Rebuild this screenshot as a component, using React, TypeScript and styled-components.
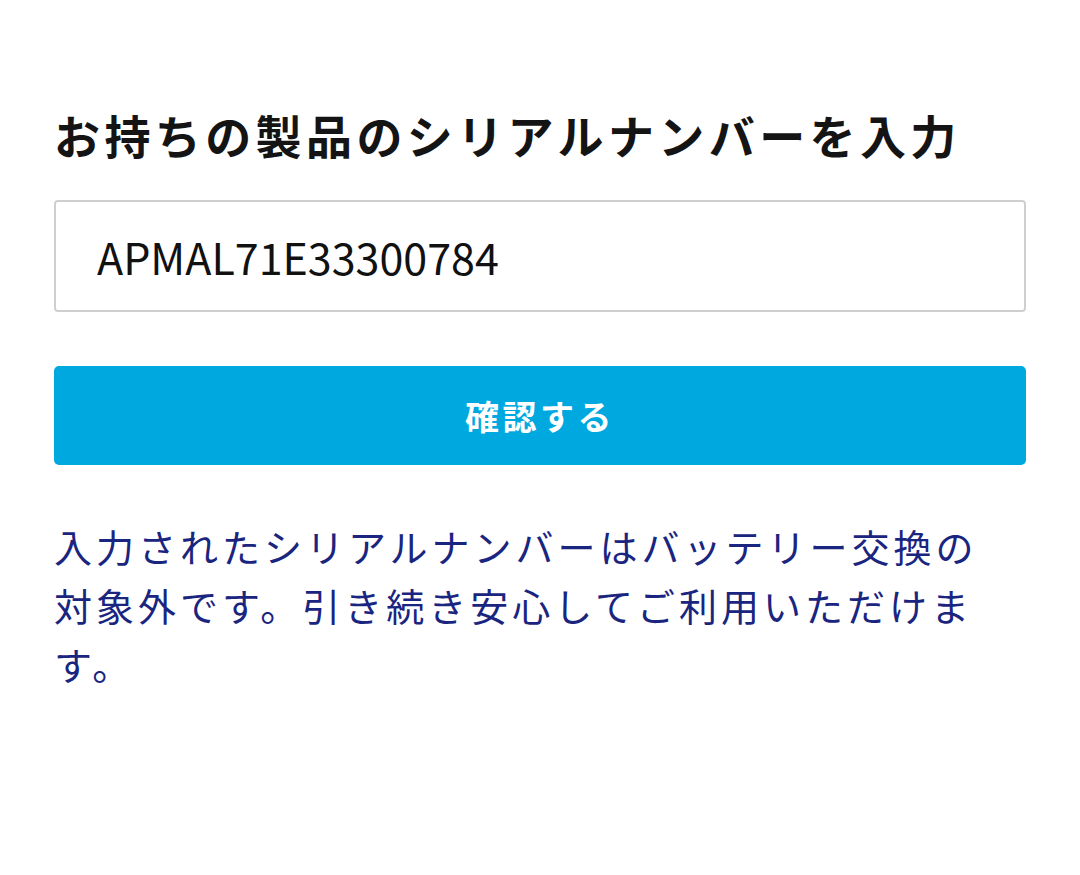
import React from 'react';
import styled, { createGlobalStyle } from 'styled-components';

const GlobalStyle = createGlobalStyle`
  html, body {
    margin: 0;
    padding: 0;
    background: #ffffff;
  }
  body {
    font-family: "Noto Sans CJK JP", "Noto Sans", sans-serif;
  }
`;

const Page = styled.main`
  width: 1080px;
  box-sizing: border-box;
  padding: 100px 54px 0;
  display: flex;
  flex-direction: column;
`;

const Title = styled.h1`
  margin: 0;
  font-size: 46px;
  line-height: 69px;
  font-weight: 700;
  letter-spacing: 4.4px;
  color: #141414;
`;

const SerialInput = styled.input`
  margin-top: 31px;
  height: 112px;
  box-sizing: border-box;
  border: 2px solid #cfcfcf;
  border-radius: 4px;
  padding: 0 41px;
  font-family: "Noto Sans CJK JP", "Noto Sans", sans-serif;
  font-size: 43px;
  color: #111;
  background: #fff;
  outline: none;
`;

const ConfirmButton = styled.button`
  margin-top: 54px;
  height: 99px;
  border: none;
  border-radius: 5px;
  background: #00a8e0;
  color: #fff;
  font-family: "Noto Sans CJK JP", "Noto Sans", sans-serif;
  font-size: 34px;
  font-weight: 700;
  letter-spacing: 3.5px;
  cursor: pointer;
`;

const Notice = styled.p`
  margin: 51px 0 0;
  padding-right: 30px;
  font-size: 38px;
  line-height: 59px;
  letter-spacing: 4px;
  color: #1a2580;
`;

export default function App() {
  return (
    <>
      <GlobalStyle />
      <Page>
        <Title>お持ちの製品のシリアルナンバーを入力</Title>
        <SerialInput defaultValue="APMAL71E33300784" readOnly />
        <ConfirmButton type="button">確認する</ConfirmButton>
        <Notice>
          入力されたシリアルナンバーはバッテリー交換の対象外です。引き続き安心してご利用いただけます。
        </Notice>
      </Page>
    </>
  );
}
